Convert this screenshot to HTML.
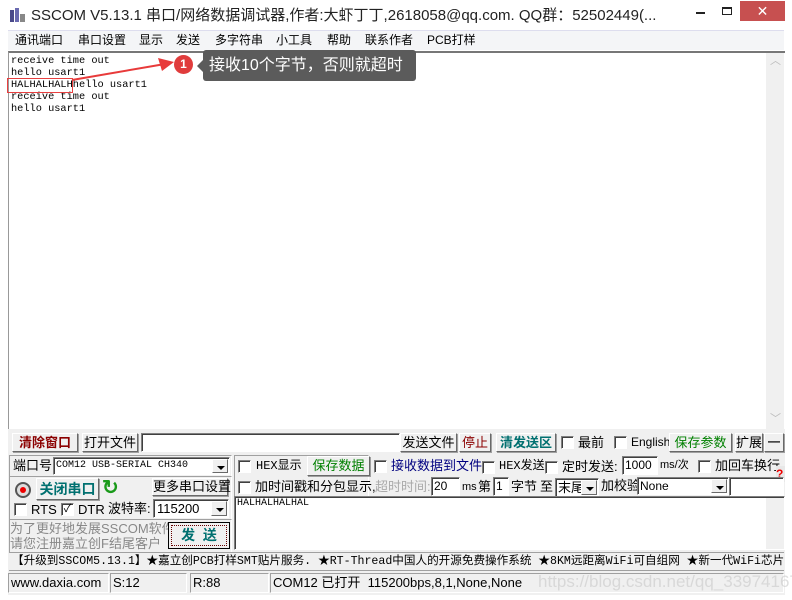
<!DOCTYPE html>
<html><head><meta charset="utf-8"><style>
*{margin:0;padding:0;box-sizing:border-box}
body{width:792px;height:600px;overflow:hidden;background:#fff;font-family:"Liberation Sans","Noto Sans CJK SC",sans-serif;font-size:12px;color:#000;position:relative}
.a{position:absolute;white-space:nowrap;line-height:15px}
.btn{position:absolute;background:#f0f0f0;border:1px solid;border-color:#fff #696969 #696969 #fff;box-shadow:1px 1px 0 #a0a0a0;text-align:center;white-space:nowrap;font-size:12px}
.in{position:absolute;background:#fff;border:1px solid;border-color:#808080 #fff #fff #808080;box-shadow:inset 1px 1px 0 #404040;white-space:nowrap;overflow:hidden}
.cb{position:absolute;width:13px;height:13px;background:#fff;border:1px solid;border-color:#808080 #fff #fff #808080;box-shadow:inset 1px 1px 0 #404040}
.dd{position:absolute;right:1px;top:1px;bottom:1px;width:16px;background:#f0f0f0;border:1px solid;border-color:#fff #696969 #696969 #fff}
.dd:after{content:"";position:absolute;left:4px;top:6px;border:4px solid transparent;border-top:4px solid #000;border-bottom:0}
.mono{font-family:"Liberation Mono","Noto Sans CJK SC",monospace}
.sep{position:absolute;border:1px solid;border-color:#a0a0a0 #fff #fff #a0a0a0}
</style></head><body>
<div class="a" style="left:10px;top:8px;width:15px;height:14px">
<div class="a" style="left:0;top:2px;width:4px;height:12px;background:#4a4a8a"></div>
<div class="a" style="left:5px;top:0;width:4px;height:14px;background:#6a6ab0"></div>
<div class="a" style="left:10px;top:6px;width:5px;height:8px;background:#888"></div>
</div>
<div class="a" style="left:31px;top:7px;font-size:15px;line-height:18px;color:#222">SSCOM V5.13.1 串口/网络数据调试器,作者:大虾丁丁,2618058@qq.com. QQ群：52502449(...</div>
<div class="a" style="left:696px;top:12px;width:9px;height:2px;background:#222"></div>
<div class="a" style="left:722px;top:7px;width:10px;height:8px;border:1px solid #222;border-top-width:2px"></div>
<div class="a" style="left:740px;top:1px;width:45px;height:20px;background:#c75050;color:#fff;text-align:center;font-size:14px;line-height:20px">✕</div>
<div class="a" style="left:8px;top:30px;width:776px;height:20px;background:#f4f5f7;border-top:1px solid #dde"></div>
<div class="a" style="top:33px;left:15px">通讯端口</div>
<div class="a" style="top:33px;left:78px">串口设置</div>
<div class="a" style="top:33px;left:139px">显示</div>
<div class="a" style="top:33px;left:176px">发送</div>
<div class="a" style="top:33px;left:215px">多字符串</div>
<div class="a" style="top:33px;left:276px">小工具</div>
<div class="a" style="top:33px;left:327px">帮助</div>
<div class="a" style="top:33px;left:365px">联系作者</div>
<div class="a" style="top:33px;left:427px">PCB打样</div>
<div class="a" style="left:8px;top:51px;width:777px;height:378px;border-top:2px solid #777;border-left:1px solid #999;background:#fff"></div>
<div class="a" style="left:766px;top:53px;width:18px;height:376px;background:#f0f0f0"></div>
<div class="a" style="left:770px;top:54px;color:#bbb;font-size:11px">︿</div>
<div class="a" style="left:770px;top:412px;color:#bbb;font-size:11px">﹀</div>
<div class="a mono" style="left:11px;top:55px;font-size:10.3px;line-height:12px;color:#000">receive time out<br>hello usart1<br>HALHALHALHhello usart1<br>receive time out<br>hello usart1</div>
<div class="a" style="left:7px;top:78px;width:66px;height:15px;border:1px solid #e84040"></div>
<svg class="a" style="left:70px;top:55px" width="110" height="30"><line x1="2" y1="25" x2="95" y2="9" stroke="#e83a3a" stroke-width="2"/><polygon points="104,7 88,3 92,16" fill="#e83a3a"/></svg>
<div class="a" style="left:174px;top:55px;width:19px;height:19px;border-radius:50%;background:#e03c3c;color:#fff;text-align:center;font-size:12px;line-height:19px;font-weight:bold">1</div>
<div class="a" style="left:203px;top:50px;width:213px;height:31px;background:#5b5b5b;border-radius:3px;color:#fff;font-size:16px;line-height:31px;padding-left:6px">接收10个字节，否则就超时</div>
<div class="a" style="left:197px;top:60px;border:6px solid transparent;border-right:6px solid #5b5b5b;border-left:0"></div>
<div class="a" style="left:8px;top:429px;width:777px;height:166px;background:#f0f0f0"></div>
<div class="a" style="left:0;top:595px;width:792px;height:5px;background:#fff"></div>
<div class="btn" style="left:12px;top:433px;width:66px;height:19px;color:#8b0000;font-weight:bold;line-height:17px;font-size:13px">清除窗口</div>
<div class="btn" style="left:82px;top:433px;width:56px;height:19px;line-height:17px;font-size:13px">打开文件</div>
<div class="in" style="left:141px;top:433px;width:259px;height:19px"></div>
<div class="btn" style="left:400px;top:433px;width:57px;height:19px;line-height:17px;font-size:13px">发送文件</div>
<div class="btn" style="left:459px;top:433px;width:32px;height:19px;line-height:17px;color:#8b0000;font-size:13px">停止</div>
<div class="btn" style="left:496px;top:433px;width:60px;height:19px;line-height:17px;color:#007070;font-weight:bold;font-size:13px">清发送区</div>
<div class="cb" style="left:561px;top:436px"></div><div class="a" style="left:578px;top:435px;font-size:13px">最前</div>
<div class="cb" style="left:614px;top:436px"></div><div class="a" style="left:631px;top:435px;font-size:12px">English</div>
<div class="btn" style="left:669px;top:433px;width:63px;height:19px;line-height:17px;color:#008000;font-size:13px">保存参数</div>
<div class="btn" style="left:735px;top:433px;width:28px;height:19px;line-height:17px;font-size:13px">扩展</div>
<div class="btn" style="left:764px;top:433px;width:20px;height:19px;line-height:15px;font-weight:bold">—</div>
<div class="sep" style="left:9px;top:455px;width:223px;height:98px"></div>
<div class="a" style="left:13px;top:458px;font-size:13px">端口号</div>
<div class="in mono" style="left:53px;top:457px;width:177px;height:18px;font-size:10px;line-height:16px;padding-left:2px">COM12 USB-SERIAL CH340<div class="dd"></div></div>
<div class="a" style="left:15px;top:482px;width:16px;height:16px;border-radius:50%;background:#ddd;border:2px solid #555"><div class="a" style="left:3px;top:3px;width:6px;height:6px;border-radius:50%;background:#e00"></div></div>
<div class="btn" style="left:36px;top:478px;width:63px;height:22px;line-height:20px;color:#007070;font-weight:bold;font-size:14px">关闭串口</div>
<div class="a" style="left:102px;top:478px;color:#1a9a1a;font-size:20px;font-weight:bold;line-height:20px">↻</div>
<div class="btn" style="left:152px;top:478px;width:76px;height:18px;line-height:16px;font-size:13px">更多串口设置</div>
<div class="sep" style="left:9px;top:476px;width:223px;height:0;border-bottom:0"></div>
<div class="cb" style="left:14px;top:503px"></div><div class="a" style="left:31px;top:502px;font-size:13px">RTS</div>
<div class="cb" style="left:61px;top:503px;font-size:11px;line-height:10px;text-align:center">✓</div><div class="a" style="left:78px;top:502px;font-size:13px">DTR</div>
<div class="a" style="left:108px;top:501px;font-size:13px">波特率:</div>
<div class="in" style="left:153px;top:499px;width:76px;height:19px;font-size:13px;line-height:17px;padding-left:3px">115200<div class="dd"></div></div>
<div class="sep" style="left:9px;top:519px;width:223px;height:0;border-bottom:0"></div>
<div class="a" style="left:10px;top:521px;color:#888;font-size:13px;line-height:15px">为了更好地发展SSCOM软件<br>请您注册嘉立创F结尾客户</div>
<div class="btn" style="left:168px;top:522px;width:62px;height:27px;border:1px solid #000;box-shadow:none;line-height:23px;color:#007070;font-weight:bold;font-size:14px"><div style="border:1px dotted #600;margin:2px;height:21px;line-height:19px">发&nbsp;&nbsp;送</div></div>
<div class="sep" style="left:234px;top:455px;width:135px;height:42px"></div>
<div class="cb" style="left:238px;top:460px"></div><div class="a mono" style="left:256px;top:459px;font-size:12px">HEX显示</div>
<div class="btn" style="left:307px;top:456px;width:63px;height:20px;line-height:18px;color:#008000;font-size:13px">保存数据</div>
<div class="cb" style="left:374px;top:460px"></div><div class="a" style="left:391px;top:458px;color:#000080;font-size:13px">接收数据到文件</div>
<div class="cb" style="left:482px;top:461px"></div><div class="a mono" style="left:499px;top:459px;font-size:12px">HEX发送</div>
<div class="cb" style="left:545px;top:461px"></div><div class="a" style="left:562px;top:459px;font-size:13px">定时发送:</div>
<div class="in" style="left:622px;top:456px;width:36px;height:19px;font-size:12px;line-height:17px;padding-left:2px">1000</div>
<div class="a" style="left:660px;top:458px;font-size:11px">ms/次</div>
<div class="cb" style="left:698px;top:460px"></div><div class="a" style="left:715px;top:458px;font-size:13px">加回车换行</div>
<div class="a" style="left:776px;top:466px;width:9px;height:16px;background:#e8e8e8;color:#e00;font-weight:bold;font-size:12px;line-height:16px">?</div>
<div class="cb" style="left:238px;top:481px"></div><div class="a" style="left:255px;top:479px;font-size:13px">加时间戳和分包显示,</div>
<div class="a" style="left:375px;top:479px;font-size:13px;color:#aaa">超时时间:</div>
<div class="in" style="left:431px;top:477px;width:29px;height:19px;font-size:12px;line-height:17px;padding-left:2px">20</div>
<div class="a" style="left:462px;top:480px;font-size:11px">ms</div>
<div class="a" style="left:478px;top:479px;font-size:13px">第</div>
<div class="in" style="left:493px;top:477px;width:16px;height:19px;font-size:12px;line-height:17px;padding-left:2px">1</div>
<div class="a" style="left:511px;top:479px;font-size:13px">字节</div>
<div class="a" style="left:540px;top:479px;font-size:13px">至</div>
<div class="in" style="left:555px;top:478px;width:44px;height:19px;font-size:13px;line-height:17px;padding-left:2px">末尾<div class="dd"></div></div>
<div class="a" style="left:601px;top:478px;font-size:13px">加校验</div>
<div class="in" style="left:637px;top:477px;width:92px;height:18px;font-size:12px;line-height:16px;padding-left:2px">None<div class="dd"></div></div>
<div class="in" style="left:729px;top:477px;width:55px;height:19px"></div>
<div class="in" style="left:234px;top:496px;width:551px;height:54px"></div>
<div class="a" style="left:766px;top:498px;width:18px;height:51px;background:#f0f0f0"></div>
<div class="a mono" style="left:237px;top:498px;font-size:10px;line-height:12px">HALHALHALHAL</div>
<div class="a" style="left:9px;top:552px;width:775px;height:19px;border-top:1px solid #a0a0a0;border-bottom:1px solid #a0a0a0"></div>
<div class="a" style="left:12px;top:554px;font-size:11.6px;font-family:'Liberation Mono','Noto Sans CJK SC',monospace;width:772px;overflow:hidden">【升级到SSCOM5.13.1】★嘉立创PCB打样SMT贴片服务. ★RT-Thread中国人的开源免费操作系统 ★8KM远距离WiFi可自组网 ★新一代WiFi芯片兼容</div>
<div class="sep" style="left:8px;top:573px;width:101px;height:20px"></div>
<div class="a" style="left:11px;top:575px;font-size:13px">www.daxia.com</div>
<div class="sep" style="left:110px;top:573px;width:77px;height:20px"></div>
<div class="a" style="left:113px;top:575px;font-size:13px">S:12</div>
<div class="sep" style="left:190px;top:573px;width:79px;height:20px"></div>
<div class="a" style="left:193px;top:575px;font-size:13px">R:88</div>
<div class="sep" style="left:270px;top:573px;width:514px;height:20px"></div>
<div class="a" style="left:273px;top:575px;font-size:13px">COM12 已打开&nbsp; 115200bps,8,1,None,None</div>
<div class="a" style="left:538px;top:572px;font-size:17px;line-height:20px;color:rgba(200,200,200,0.6)">https://blog.csdn.net/qq_33974167</div>
</body></html>
